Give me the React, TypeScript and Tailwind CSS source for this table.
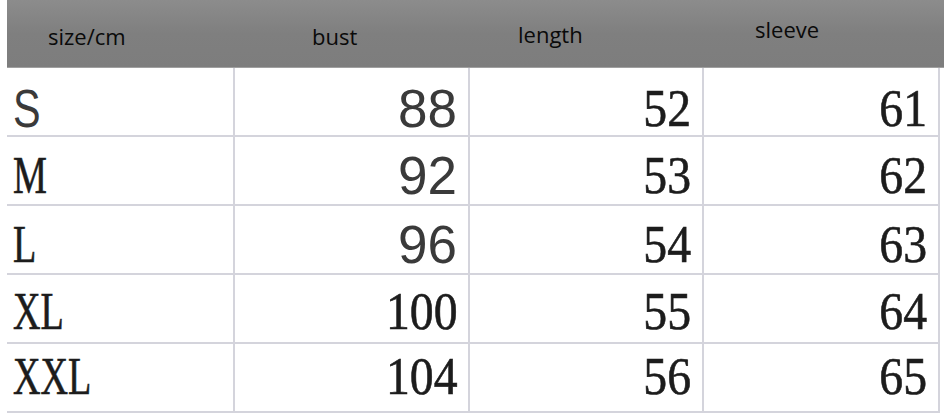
import React from "react";

type Cell = { t: string; sans?: boolean };
type Row = { size: Cell; vals: Cell[]; pb: string };

const rows: Row[] = [
  { size: { t: "S", sans: true }, vals: [{ t: "88", sans: true }, { t: "52" }, { t: "61" }], pb: "pb-0" },
  { size: { t: "M" }, vals: [{ t: "92", sans: true }, { t: "53" }, { t: "62" }], pb: "pb-[2px]" },
  { size: { t: "L" }, vals: [{ t: "96", sans: true }, { t: "54" }, { t: "63" }], pb: "pb-[2px]" },
  { size: { t: "XL" }, vals: [{ t: "100" }, { t: "55" }, { t: "64" }], pb: "pb-[4px]" },
  { size: { t: "XXL" }, vals: [{ t: "104" }, { t: "56" }, { t: "65" }], pb: "pb-[8px]" },
];

const sansCls = "font-['Liberation_Sans',Arial,sans-serif] text-[53px] leading-none text-[#3a3a3a]";
const serifCls = "font-['Liberation_Serif','Times_New_Roman',serif] text-[53px] leading-none text-[#1c1c1c] [-webkit-text-stroke:0.6px_#1c1c1c]";

export default function App() {
  return (
    <div className="w-[944px] h-[416px] bg-white overflow-hidden pl-[7px]">
      <div className="h-[68px] bg-[#7f7f7f] bg-gradient-to-b from-[#8c8c8c] via-[#7f7f7f] to-[#7d7d7d] border-b border-[#a0a0a0] flex font-['Open_Sans','Noto_Sans',sans-serif] text-[22px] leading-[30px] text-[#0a0a0a]">
        <div className="w-[228px] pl-[41px] pt-[21px]">size/cm</div>
        <div className="w-[235px] pl-[77px] pt-[21px]">bust</div>
        <div className="w-[234px] pl-[48px] pt-[19px]">length</div>
        <div className="w-[234px] pl-[51px] pt-[14px]">sleeve</div>
      </div>
      <div className="w-[933px] grid grid-cols-[228px_235px_234px_236px]">
        {rows.map((r, i) => (
          <React.Fragment key={i}>
            <div className={`h-[69px] border-b-2 border-r-2 border-[#d4d4dc] flex items-end pl-[6px] ${r.pb}`}>
              {r.size.sans ? (
                <span className={`${sansCls} inline-block origin-left scale-x-[0.78]`}>{r.size.t}</span>
              ) : (
                <span className={`${serifCls} inline-block origin-left scale-x-[0.72]`}>{r.size.t}</span>
              )}
            </div>
            {r.vals.map((v, j) => (
              <div
                key={j}
                className={`h-[69px] border-b-2 border-r-2 border-[#d4d4dc] flex items-end justify-end pr-[11px] ${r.pb}`}
              >
                {v.sans ? (
                  <span className={sansCls}>{v.t}</span>
                ) : (
                  <span className={`${serifCls} inline-block origin-right scale-x-[0.9]`}>{v.t}</span>
                )}
              </div>
            ))}
          </React.Fragment>
        ))}
      </div>
    </div>
  );
}
